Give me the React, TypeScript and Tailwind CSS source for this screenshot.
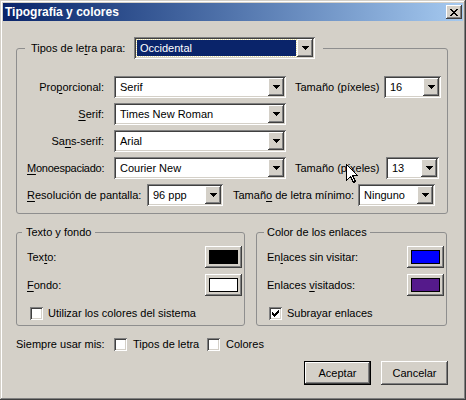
import type { ReactNode } from "react"

// classic 3D bevels
const sunken =
  "shadow-[inset_1px_1px_#808080,inset_-1px_-1px_#ffffff,inset_2px_2px_#404040,inset_-2px_-2px_#d4d0c8]"
const raised = "shadow-[inset_-1px_-1px_#404040,inset_1px_1px_#ffffff,inset_-2px_-2px_#808080]"

function U({ children }: { children: ReactNode }) {
  return <span className="underline underline-offset-[2px]">{children}</span>
}

function DropArrow() {
  return (
    <div className={`flex w-[16px] shrink-0 items-center justify-center bg-[#d4d0c8] ${raised}`}>
      <svg width="7" height="4" viewBox="0 0 7 4" shapeRendering="crispEdges">
        <path d="M0 0h7v1h-1v1h-1v1h-1v1h-1v-1h-1v-1h-1v-1h-1z" fill="#000" />
      </svg>
    </div>
  )
}

function Combo({ value, className, focused }: { value: string; className: string; focused?: boolean }) {
  return (
    <div className={`flex h-[22px] shrink-0 bg-white p-[2px] ${sunken} ${className}`}>
      {focused ? (
        <div className="m-[1px] flex min-w-0 flex-1 items-center bg-[#0a246a] pl-[3px] text-white outline outline-1 outline-dotted outline-[#e8e0a0]">
          {value}
        </div>
      ) : (
        <div className="flex min-w-0 flex-1 items-center pl-[4px]">{value}</div>
      )}
      <DropArrow />
    </div>
  )
}

function ColorButton({ swatch }: { swatch: string }) {
  return (
    <div className={`flex h-[22px] w-[37px] shrink-0 items-center justify-center bg-[#d4d0c8] ${raised}`}>
      <div className={`h-[14px] w-[29px] border border-black ${swatch}`} />
    </div>
  )
}

function Checkbox({ checked, className = "" }: { checked?: boolean; className?: string }) {
  return (
    <div className={`flex h-[13px] w-[13px] shrink-0 items-center justify-center bg-white ${sunken} ${className}`}>
      {checked && (
        <svg width="7" height="7" viewBox="0 0 7 7" shapeRendering="crispEdges">
          <path
            d="M6 0h1v1h-1z M5 1h2v1h-2z M0 2h1v1h-1z M4 2h3v1h-3z M0 3h2v1h-2z M3 3h3v1h-3z M0 4h5v1h-5z M1 5h3v1h-3z M2 6h1v1h-1z"
            fill="#000"
          />
        </svg>
      )}
    </div>
  )
}

function PushButton({ label, isDefault }: { label: string; isDefault?: boolean }) {
  return (
    <button
      className={`flex h-[24px] w-[67px] items-center justify-center bg-[#d4d0c8] ${raised} ${
        isDefault ? "border border-black" : ""
      }`}
    >
      {label}
    </button>
  )
}

export default function App() {
  return (
    <div className="font-['Liberation_Sans',Arial,sans-serif] text-[11px] leading-[13px] text-black">
      <div className="relative flex h-[400px] w-[466px] flex-col bg-[#d4d0c8] p-[3px] shadow-[inset_-1px_-1px_#404040,inset_1px_1px_#d4d0c8,inset_-2px_-2px_#808080,inset_2px_2px_#ffffff]">
        {/* caption */}
        <div className="flex h-[18px] items-center justify-between bg-linear-to-r from-[#0a246a] to-[#a6caf0] pl-[2px] pr-[1px]">
          <span className="text-[12px] font-bold text-white">Tipografía y colores</span>
          <div className={`flex h-[14px] w-[16px] items-center justify-center bg-[#d4d0c8] ${raised}`}>
            <svg width="8" height="7" viewBox="0 0 8 7" shapeRendering="crispEdges">
              <path
                d="M0 0h2v1h-2z M6 0h2v1h-2z M1 1h2v1h-2z M5 1h2v1h-2z M2 2h4v1h-4z M3 3h2v1h-2z M2 4h4v1h-4z M1 5h2v1h-2z M5 5h2v1h-2z M0 6h2v1h-2z M6 6h2v1h-2z"
                fill="#000"
              />
            </svg>
          </div>
        </div>

        <div className="flex flex-col pl-[13px] pr-[15px] pt-[16px]">
          {/* fonts */}
          <fieldset className="w-[432px] rounded-[3px] border border-[#8e8e8e] pb-[7px] pt-[17px]">
            <legend className="ml-[8px] pl-[6px] pr-[8px]">
              <div className="flex items-center">
                <span className="w-[103px]">
                  Tipos de le<U>t</U>ra para:
                </span>
                <Combo className="w-[181px]" value="Occidental" focused />
              </div>
            </legend>
            <div className="flex flex-col gap-[5px] pl-[10px]">
              <div className="flex h-[22px] items-center">
                <span className="w-[77px] text-right">
                  Pro<U>p</U>orcional:
                </span>
                <Combo className="ml-[10px] w-[172px]" value="Serif" />
                <span className="ml-[9px] w-[89px]">Tamaño (píxeles)</span>
                <Combo className="w-[57px]" value="16" />
              </div>
              <div className="flex h-[22px] items-center">
                <span className="w-[77px] text-right">
                  <U>S</U>erif:
                </span>
                <Combo className="ml-[10px] w-[172px]" value="Times New Roman" />
              </div>
              <div className="flex h-[22px] items-center">
                <span className="w-[77px] text-right">
                  Sa<U>n</U>s-serif:
                </span>
                <Combo className="ml-[10px] w-[172px]" value="Arial" />
              </div>
              <div className="flex h-[22px] items-center">
                <span className="w-[77px] whitespace-nowrap text-right tracking-[-0.25px]">
                  <U>M</U>onoespaciado:
                </span>
                <Combo className="ml-[10px] w-[172px]" value="Courier New" />
                <span className="ml-[9px] w-[91px]">Tamaño (píxeles)</span>
                <Combo className="w-[53px]" value="13" />
              </div>
              <div className="flex h-[22px] items-center">
                <span className="w-[120px]">
                  <U>R</U>esolución de pantalla:
                </span>
                <Combo className="w-[76px]" value="96 ppp" />
                <span className="ml-[10px] w-[125px]">
                  Tamañ<U>o</U> de letra mínimo:
                </span>
                <Combo className="w-[77px]" value="Ninguno" />
              </div>
            </div>
          </fieldset>

          {/* colours */}
          <div className="mt-[12px] flex gap-[11px]">
            <fieldset className="w-[229px] rounded-[3px] border border-[#8e8e8e] pb-[5px] pt-[7px]">
              <legend className="ml-[5px] px-[4px]">Texto y fondo</legend>
              <div className="flex flex-col pl-[10px] pr-[2px]">
                <div className="flex h-[22px] items-center justify-between">
                  <span>
                    Tex<U>t</U>o:
                  </span>
                  <ColorButton swatch="bg-black" />
                </div>
                <div className="mt-[6px] flex h-[22px] items-center justify-between">
                  <span>
                    <U>F</U>ondo:
                  </span>
                  <ColorButton swatch="bg-white" />
                </div>
                <div className="mt-[11px] flex h-[13px] items-center gap-[5px] pl-[3px]">
                  <Checkbox />
                  <span>Utilizar los colores del sistema</span>
                </div>
              </div>
            </fieldset>

            <fieldset className="w-[191px] rounded-[3px] border border-[#8e8e8e] pb-[5px] pt-[7px]">
              <legend className="ml-[7px] px-[3px]">Color de los enlaces</legend>
              <div className="flex flex-col pl-[10px] pr-[2px]">
                <div className="flex h-[22px] items-center justify-between">
                  <span>
                    En<U>l</U>aces sin visitar:
                  </span>
                  <ColorButton swatch="bg-[#0000ff]" />
                </div>
                <div className="mt-[6px] flex h-[22px] items-center justify-between">
                  <span>
                    Enlaces <U>v</U>isitados:
                  </span>
                  <ColorButton swatch="bg-[#551a8b]" />
                </div>
                <div className="mt-[11px] flex h-[13px] items-center gap-[5px] pl-[2px]">
                  <Checkbox checked />
                  <span>Subrayar enlaces</span>
                </div>
              </div>
            </fieldset>
          </div>

          {/* overrides */}
          <div className="mt-[12px] flex h-[13px] items-center">
            <span className="w-[98px]">Siempre usar mis:</span>
            <Checkbox />
            <span className="ml-[6px] w-[74px]">Tipos de letra</span>
            <Checkbox />
            <span className="ml-[6px]">Colores</span>
          </div>

          <div className="mt-[10px] flex justify-end gap-[10px]">
            <PushButton label="Aceptar" isDefault />
            <PushButton label="Cancelar" />
          </div>
        </div>

        {/* mouse pointer */}
        <svg
          className="absolute left-[346px] top-[164px]"
          width="12"
          height="19"
          viewBox="0 0 12 19"
          shapeRendering="crispEdges"
        >
          <path d="M0.5 0.5V16.5L4.5 12.5L7.5 18.5L9.5 17.5L6.5 11.5H11.5Z" fill="#fff" stroke="#000" strokeWidth="1" />
        </svg>
      </div>
    </div>
  )
}
